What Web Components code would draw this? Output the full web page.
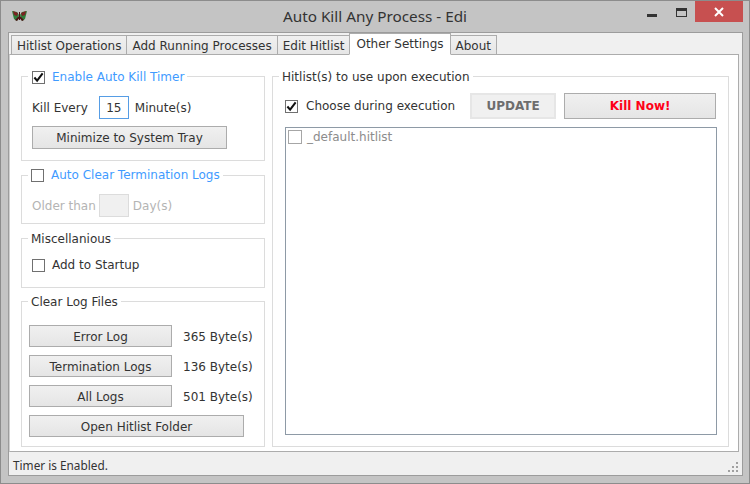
<!DOCTYPE html>
<html>
<head>
<meta charset="utf-8">
<title>Auto Kill Any Process - Edi</title>
<style>
    html, body { margin: 0; height: 100%; overflow: hidden; }
    body { font: 12px "DejaVu Sans", sans-serif; color: #333; }
</style>
</head>
<body>
<app-window>
    <title-bar slot="title">Auto Kill Any Process - Edi</title-bar>
    <tab-strip slot="tabs">
        <tab-item>Hitlist Operations</tab-item>
        <tab-item>Add Running Processes</tab-item>
        <tab-item>Edit Hitlist</tab-item>
        <tab-item selected>Other Settings</tab-item>
        <tab-item>About</tab-item>
    </tab-strip>
    <settings-panel slot="panel">
        <group-box slot="left" box-height="93" pad="12px 0 0 10px">
            <check-box slot="legend" checked accent style="margin-left:1px">Enable Auto Kill Timer</check-box>
            <form-row><span>Kill Every</span><text-field active>15</text-field><span>Minute(s)</span></form-row>
            <push-button width="195" height="23" style="margin-top:7px">Minimize to System Tray</push-button>
        </group-box>
        <group-box slot="left" box-height="57" pad="11px 0 0 10px" style="margin-top:6px; --legend-shift:0px">
            <check-box slot="legend" accent>Auto Clear Termination Logs</check-box>
            <form-row muted><span>Older than</span><text-field></text-field><span>Day(s)</span></form-row>
        </group-box>
        <group-box slot="left" box-height="58" pad="12px 0 0 10px" style="margin-top:6px">
            <span slot="legend">Miscellanious</span>
            <check-box>Add to Startup</check-box>
        </group-box>
        <group-box slot="left" box-height="154" pad="16px 0 0 7px" style="margin-top:5px">
            <span slot="legend">Clear Log Files</span>
            <log-row size="365 Byte(s)">Error Log</log-row>
            <log-row size="136 Byte(s)">Termination Logs</log-row>
            <log-row size="501 Byte(s)">All Logs</log-row>
            <push-button width="215" height="22" style="padding-top:1px">Open Hitlist Folder</push-button>
        </group-box>
        <group-box slot="right" box-height="379" pad="9px 0 0 12px">
            <span slot="legend">Hitlist(s) to use upon execution</span>
            <form-row>
                <check-box checked style="gap:8px">Choose during execution</check-box>
                <push-button kind="flat" width="86" height="26" style="margin-left:15px">UPDATE</push-button>
                <push-button kind="danger" width="152" height="26" style="margin-left:8px">Kill Now!</push-button>
            </form-row>
            <hit-list>
                <check-box muted>_default.hitlist</check-box>
            </hit-list>
        </group-box>
    </settings-panel>
    <status-bar slot="status">Timer is Enabled.</status-bar>
</app-window>

<script>
// --- Window shell ---
class AppWindow extends HTMLElement {
    constructor() {
        super();
        this.attachShadow({ mode: 'open' });
        this.shadowRoot.innerHTML = `
            <style>
                :host {
                    display: flex;
                    flex-direction: column;
                    box-sizing: border-box;
                    width: 750px;
                    height: 484px;
                    background: #c4c4c4;
                    border: 1px solid #8c8c8c;
                }
                .client {
                    display: flex;
                    flex-direction: column;
                    margin: 0 6px 7px 7px;
                    height: 444px;
                    background: #f0f0f0;
                    border: 1px solid #9c9c9c;
                    box-sizing: border-box;
                }
            </style>
            <slot name="title"></slot>
            <div class="client">
                <slot name="tabs"></slot>
                <slot name="panel"></slot>
                <slot name="status"></slot>
            </div>
        `;
    }
}
customElements.define('app-window', AppWindow);

class TitleBar extends HTMLElement {
    constructor() {
        super();
        this.attachShadow({ mode: 'open' });
        this.shadowRoot.innerHTML = `
            <style>
                :host {
                    display: flex;
                    align-items: flex-start;
                    height: 31px;
                    flex: none;
                    font: 15.3px "Noto Sans", "Open Sans", sans-serif;
                    color: #333;
                }
                svg.logo { margin: 9px 0 0 11px; flex: none; }
                .text { flex: 1; text-align: center; line-height: 31px; padding-left: 76px; }
                .ctrl { display: flex; flex: none; margin-right: 6px; }
                .min { width: 10px; height: 3px; background: #333; margin: 13px 19px 0 0; }
                .max { box-sizing: border-box; width: 11px; height: 9px; border: 1px solid #333; border-top-width: 3px; margin: 7px 8px 0 0; }
                .close {
                    display: flex; align-items: center; justify-content: center;
                    width: 48px; height: 21px; background: #c75050;
                }
            </style>
            <svg class="logo" width="15" height="12" viewBox="0 0 15 12">
                <path d="M0 1 L5 2 L7 5 L5 11 L2 9 Z" fill="#2f7d3a"/>
                <path d="M15 1 L10 2 L8 5 L10 11 L13 9 Z" fill="#2f7d3a"/>
                <path d="M1 1 L6 3 L5 6 L2 5 Z M14 1 L9 3 L10 6 L13 5 Z" fill="#7a2222"/>
                <path d="M7 2 L8 2 L8 10 L7 10 Z M3 10 L7 6 L8 6 L12 10 L10 11 L7.500 8 L5 11 Z" fill="#4a1414"/>
            </svg>
            <div class="text"><slot></slot></div>
            <div class="ctrl">
                <div class="min"></div>
                <div class="max"></div>
                <div class="close">
                    <svg width="10" height="10" viewBox="0 0 10 10"><path d="M1 1 L9 9 M9 1 L1 9" stroke="#fff" stroke-width="2"/></svg>
                </div>
            </div>
        `;
    }
}
customElements.define('title-bar', TitleBar);

// --- Tabs ---
class TabStrip extends HTMLElement {
    constructor() {
        super();
        this.attachShadow({ mode: 'open' });
        this.shadowRoot.innerHTML = `
            <style>
                :host {
                    display: flex;
                    align-items: flex-end;
                    flex: none;
                    height: 21px;
                    padding-left: 2px;
                }
            </style>
            <slot></slot>
        `;
    }
}
customElements.define('tab-strip', TabStrip);

class TabItem extends HTMLElement {
    constructor() {
        super();
        this.attachShadow({ mode: 'open' });
        this.shadowRoot.innerHTML = `
            <style>
                :host {
                    display: block;
                    box-sizing: border-box;
                    height: 20px;
                    line-height: 20px;
                    padding: 0 5px;
                    margin-bottom: -1px;
                    margin-right: -1px;
                    border: 1px solid #acacac;
                    background: linear-gradient(#f0f0f0, #e6e6e6);
                    white-space: nowrap;
                    color: #333;
                }
                :host([selected]) {
                    position: relative;
                    z-index: 1;
                    height: 22px;
                    line-height: 20px;
                    background: #fff;
                    border-bottom-color: #fff;
                    padding: 0 6px;
                }
            </style>
            <slot></slot>
        `;
    }
}
customElements.define('tab-item', TabItem);

// --- Panel + groups ---
class SettingsPanel extends HTMLElement {
    constructor() {
        super();
        this.attachShadow({ mode: 'open' });
        this.shadowRoot.innerHTML = `
            <style>
                :host {
                    display: grid;
                    grid-template-columns: 244px 457px;
                    column-gap: 7px;
                    align-items: start;
                    box-sizing: border-box;
                    width: 730px;
                    height: 398px;
                    flex: none;
                    padding: 13px 0 0 11px;
                    background: #fff;
                    border: 1px solid #acacac;
                    border-left-color: #d0d0d0;
                }
                .col { display: flex; flex-direction: column; }
            </style>
            <div class="col"><slot name="left"></slot></div>
            <div class="col"><slot name="right"></slot></div>
        `;
    }
}
customElements.define('settings-panel', SettingsPanel);

class GroupBox extends HTMLElement {
    constructor() {
        super();
        this.attachShadow({ mode: 'open' });
        const height = this.getAttribute('box-height');
        const pad = this.getAttribute('pad');
        this.shadowRoot.innerHTML = `
            <style>
                :host { display: block; }
                fieldset {
                    box-sizing: border-box;
                    height: ${height}px;
                    margin: 0;
                    padding: 0;
                    border: 1px solid #dcdcdc;
                }
                legend {
                    display: flex;
                    align-items: center;
                    box-sizing: border-box;
                    height: 16px;
                    margin-left: 6px;
                    padding: var(--legend-shift, 2px) 3px 0;
                }
                .body { padding: ${pad}; }
            </style>
            <fieldset>
                <legend><slot name="legend"></slot></legend>
                <div class="body"><slot></slot></div>
            </fieldset>
        `;
    }
}
customElements.define('group-box', GroupBox);

class FormRow extends HTMLElement {
    constructor() {
        super();
        this.attachShadow({ mode: 'open' });
        this.shadowRoot.innerHTML = `
            <style>
                :host {
                    display: flex;
                    align-items: center;
                }
                :host([muted]) { color: #b4b4b4; }
            </style>
            <slot></slot>
        `;
    }
}
customElements.define('form-row', FormRow);

class LogRow extends HTMLElement {
    constructor() {
        super();
        this.attachShadow({ mode: 'open' });
        this.shadowRoot.innerHTML = `
            <style>
                :host {
                    display: flex;
                    align-items: center;
                    gap: 11px;
                    margin-bottom: 8px;
                    white-space: nowrap;
                }
                span { padding-top: 2px; }
            </style>
            <push-button width="143" height="22" style="padding-top:1px"><slot></slot></push-button>
            <span>${this.getAttribute('size')}</span>
        `;
    }
}

// --- Controls ---
class PushButton extends HTMLElement {
    constructor() {
        super();
        this.attachShadow({ mode: 'open' });
        this.shadowRoot.innerHTML = `
            <style>
                :host {
                    display: flex;
                    align-items: center;
                    justify-content: center;
                    box-sizing: border-box;
                    flex: none;
                    width: ${this.getAttribute('width')}px;
                    height: ${this.getAttribute('height')}px;
                    border: 1px solid #acacac;
                    background: linear-gradient(#f0f0f0, #e5e5e5);
                    color: #333;
                    white-space: nowrap;
                }
                :host([kind="flat"]) {
                    background: #f0f0f0;
                    border: 2px solid #e6e6e6;
                    color: #6d6d6d;
                    font-weight: bold;
                }
                :host([kind="danger"]) {
                    color: #ff0018;
                    font-weight: bold;
                }
            </style>
            <slot></slot>
        `;
    }
}
customElements.define('push-button', PushButton);
customElements.define('log-row', LogRow);

class CheckBox extends HTMLElement {
    constructor() {
        super();
        this.attachShadow({ mode: 'open' });
        const tick = this.hasAttribute('checked')
            ? '<svg width="12" height="11" viewBox="0 0 12 11"><path d="M1.500 5.500 L4.500 9 L10.500 1" fill="none" stroke="#111" stroke-width="2.200"/></svg>'
            : '';
        this.shadowRoot.innerHTML = `
            <style>
                :host {
                    display: inline-flex;
                    align-items: center;
                    gap: 7px;
                    white-space: nowrap;
                }
                :host([accent]) { color: #3f9bff; }
                :host([muted]) { color: #8c8c8c; gap: 5px; }
                .box {
                    display: flex;
                    align-items: center;
                    justify-content: center;
                    box-sizing: border-box;
                    width: 13px;
                    height: 13px;
                    background: #fff;
                    border: 1px solid #707070;
                }
                :host([muted]) .box { border-color: #a6a6a6; width: 14px; height: 14px; }
            </style>
            <span class="box">${tick}</span>
            <span><slot></slot></span>
        `;
    }
}
customElements.define('check-box', CheckBox);

class TextField extends HTMLElement {
    constructor() {
        super();
        this.attachShadow({ mode: 'open' });
        this.shadowRoot.innerHTML = `
            <style>
                :host {
                    display: flex;
                    align-items: center;
                    justify-content: center;
                    box-sizing: border-box;
                    flex: none;
                    width: 30px;
                    height: 23px;
                    margin: 0 4px 0 3px;
                    border: 1px solid #dcdcdc;
                    background: #f0f0f0;
                }
                :host([active]) {
                    margin: 0 6px 0 11px;
                    border-color: #569de5;
                    background: #fff;
                    color: #333;
                }
            </style>
            <span><slot></slot></span>
        `;
    }
}
customElements.define('text-field', TextField);

class HitList extends HTMLElement {
    constructor() {
        super();
        this.attachShadow({ mode: 'open' });
        this.shadowRoot.innerHTML = `
            <style>
                :host {
                    display: block;
                    box-sizing: border-box;
                    width: 432px;
                    height: 308px;
                    margin-top: 8px;
                    padding: 2px 0 0 2px;
                    border: 1px solid #8e9aa6;
                    background: #fff;
                }
            </style>
            <slot></slot>
        `;
    }
}
customElements.define('hit-list', HitList);

class StatusBar extends HTMLElement {
    constructor() {
        super();
        this.attachShadow({ mode: 'open' });
        this.shadowRoot.innerHTML = `
            <style>
                :host {
                    display: flex;
                    align-items: center;
                    flex: 1;
                    padding: 0 3px 0 4px;
                    font: 11.8px "Noto Sans", "Open Sans", sans-serif;
                    color: #333;
                }
                span { flex: 1; padding-top: 2px; }
            </style>
            <span><slot></slot></span>
            <svg width="11" height="11" viewBox="0 0 11 11" fill="#a0a0a0" style="margin:8px 0 0 0">
                <rect x="8" y="0" width="2" height="2"/>
                <rect x="8" y="4" width="2" height="2"/><rect x="4" y="4" width="2" height="2"/>
                <rect x="8" y="8" width="2" height="2"/><rect x="4" y="8" width="2" height="2"/><rect x="0" y="8" width="2" height="2"/>
            </svg>
        `;
    }
}
customElements.define('status-bar', StatusBar);
</script>
</body>
</html>
